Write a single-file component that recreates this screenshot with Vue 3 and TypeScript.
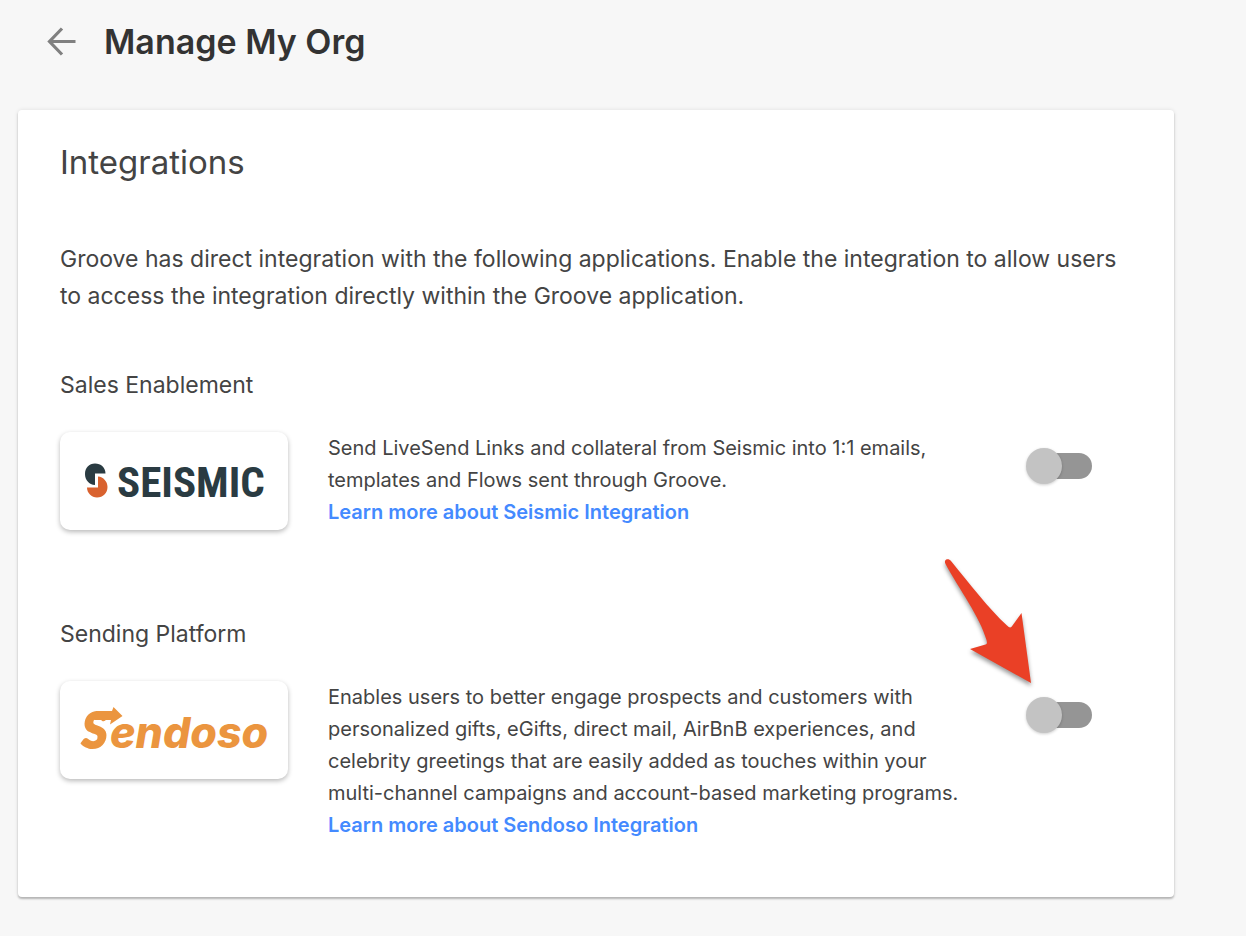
<script setup lang="ts">
import { ref } from 'vue'

interface Integration {
  id: string
  category: string
  name: string
  lines: string[]
  highlighted: boolean
}

const integrations: Integration[] = [
  {
    id: 'seismic',
    category: 'Sales Enablement',
    name: 'Seismic',
    lines: [
      'Send LiveSend Links and collateral from Seismic into 1:1 emails,',
      'templates and Flows sent through Groove.',
    ],
    highlighted: false,
  },
  {
    id: 'sendoso',
    category: 'Sending Platform',
    name: 'Sendoso',
    lines: [
      'Enables users to better engage prospects and customers with',
      'personalized gifts, eGifts, direct mail, AirBnB experiences, and',
      'celebrity greetings that are easily added as touches within your',
      'multi-channel campaigns and account-based marketing programs.',
    ],
    highlighted: true,
  },
]

const enabled = ref<Record<string, boolean>>({ seismic: false, sendoso: false })
</script>

<template>
  <main class="page">
    <header class="top">
      <button class="back" type="button" aria-label="Back">
        <svg width="30" height="30" viewBox="0 0 30 30" aria-hidden="true">
          <path d="M29.500 14.500H4M16 1.500L3.500 14.500L16 27.500" fill="none" stroke="#808080" stroke-width="3.200" />
        </svg>
      </button>
      <h1>Manage My Org</h1>
    </header>

    <section class="card">
      <h2>Integrations</h2>
      <p class="intro">
        Groove has direct integration with the following applications. Enable the integration to allow users<br />
        to access the integration directly within the Groove application.
      </p>

      <section v-for="item in integrations" :key="item.id" class="group">
        <h3>{{ item.category }}</h3>
        <div class="row">
          <div class="logo">
            <svg v-if="item.id === 'seismic'" width="228" height="98" viewBox="0 0 228 98" role="img" aria-label="Seismic">
              <path d="M35 31.500C41 31.500 45.500 35.500 45.500 41.500H35V53C29 52.500 25 48 25 42C25 36 29 31.500 35 31.500Z" fill="#2a3b42" />
              <path d="M38 44.500C43.500 45 47.500 49.500 47.500 55C47.500 61 43 65.500 37 65.500C31.500 65.500 27 61 27 55.500H38Z" fill="#d9622f" />
              <text x="57" y="65" class="seismic">SEISMIC</text>
            </svg>
            <svg v-else width="228" height="98" viewBox="0 0 228 98" role="img" aria-label="Sendoso">
              <text x="22" y="67" class="sendoso"><tspan class="initial">S</tspan><tspan x="50">endoso</tspan></text>
              <path d="M36 30H52L53.500 26L62.500 35L50 43.500L51 39H34Z" fill="#eb953f" />
            </svg>
          </div>
          <div class="description">
            <p>
              <template v-for="line in item.lines" :key="line">{{ line }}<br /></template>
            </p>
            <a href="#">Learn more about {{ item.name }} Integration</a>
          </div>
          <div class="control">
            <input v-model="enabled[item.id]" class="switch" type="checkbox" role="switch" :aria-label="`Enable ${item.name}`" />
            <svg v-if="item.highlighted" class="pointer" width="100" height="140" viewBox="0 0 100 140" aria-hidden="true">
              <path d="M10.200 9.500C11.500 7.500 14.500 8 16 10C34 32 54 58 72 74.500C74.500 77 76 77 77.500 74.500L86.500 62L96 132L35 98L50.500 93.500C52.500 93 52 91.500 51.500 89C45 66 24 38 10.500 13Q9.500 11 10.200 9.500Z" fill="#ea4026" />
            </svg>
          </div>
        </div>
      </section>
    </section>
  </main>
</template>

<style>
body {
  margin: 0;
  background: #f7f7f7;
}
</style>

<style scoped>
.page {
  box-sizing: border-box;
  min-height: 100vh;
  padding: 20px 72px 38px 18px;
  background: #f7f7f7;
  color: #444;
  font-family: Inter, "Liberation Sans", sans-serif;
}

h1,
h2,
h3,
p {
  margin: 0;
}

.top {
  display: flex;
  align-items: center;
  gap: 28px;
  padding-left: 28px;
  height: 44px;
  margin-bottom: 46px;
}

.back {
  display: flex;
  padding: 0;
  border: 0;
  background: none;
  cursor: pointer;
}

h1 {
  font-size: 34px;
  line-height: 44px;
  font-weight: 600;
  color: #333;
}

.card {
  padding: 32px 42px 56px;
  background: #fff;
  border-radius: 4px;
  box-shadow: 0 2px 2px rgba(0, 0, 0, 0.24), 0 0 4px rgba(0, 0, 0, 0.1);
}

h2 {
  font-size: 33px;
  line-height: 40px;
  font-weight: 400;
}

.intro {
  margin-top: 59px;
  font-size: 23px;
  line-height: 37px;
  white-space: nowrap;
}

h3 {
  font-size: 23px;
  line-height: 32px;
  font-weight: 400;
}

.group {
  margin-top: 54px;
}

.group + .group {
  margin-top: 88px;
}

.row {
  display: flex;
  align-items: flex-start;
  margin-top: 31px;
}

.logo {
  display: flex;
  flex: none;
  width: 228px;
  height: 98px;
  margin-right: 40px;
  border-radius: 10px;
  box-shadow: 0 2px 5px rgba(0, 0, 0, 0.28);
}

.seismic {
  font-family: "Roboto Condensed", "Liberation Sans Narrow", "Liberation Sans", sans-serif;
  font-size: 43px;
  font-weight: 700;
  fill: #2a3b42;
}

.sendoso {
  font-family: Inter, sans-serif;
  font-size: 43px;
  font-weight: 800;
  font-style: italic;
  fill: #eb953f;
}

.initial {
  font-family: Lato, sans-serif;
  font-size: 49px;
  font-weight: 900;
  stroke: #eb953f;
  stroke-width: 2px;
}

.description {
  flex: 1;
  font-size: 20px;
  line-height: 32px;
  white-space: nowrap;
}

.description a {
  display: block;
  color: #448aff;
  font-weight: 600;
  text-decoration: none;
}

.control {
  position: relative;
  display: flex;
  flex: none;
  margin: 15px 40px 0 0;
}

.switch {
  appearance: none;
  position: relative;
  display: flex;
  align-items: center;
  width: 66px;
  height: 38px;
  margin: 0;
  cursor: pointer;
}

.switch::before {
  content: "";
  position: absolute;
  inset: 6px 0 6px 4px;
  border-radius: 13px;
  background: #959595;
}

.switch::after {
  content: "";
  position: relative;
  width: 36px;
  height: 36px;
  border-radius: 50%;
  background: #c3c3c3;
  box-shadow: 0 1px 3px rgba(0, 0, 0, 0.2);
}

.switch:checked::after {
  margin-left: auto;
}

.pointer {
  position: absolute;
  right: 57px;
  bottom: 43px;
  filter: drop-shadow(0 3px 2px rgba(0, 0, 0, 0.4));
  pointer-events: none;
}
</style>
